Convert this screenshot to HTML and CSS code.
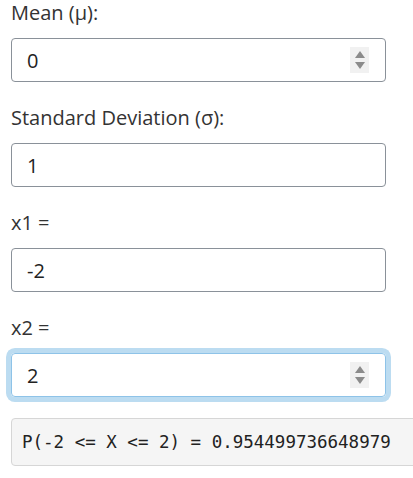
FILE: index.html
```html
<!DOCTYPE html>
<html>
<head>
<meta charset="utf-8">
<link rel="stylesheet" href="styles.css">
</head>
<body>
<div class="panel">
  <div class="form-group">
    <label class="lbl">Mean (μ):</label>
    <div class="field">
      <span class="val">0</span>
      <span class="spin"><span class="up"></span><span class="down"></span></span>
    </div>
  </div>
  <div class="form-group">
    <label class="lbl">Standard Deviation (σ):</label>
    <div class="field"><span class="val">1</span></div>
  </div>
  <div class="form-group">
    <label class="lbl">x1 =</label>
    <div class="field"><span class="val">-2</span></div>
  </div>
  <div class="form-group">
    <label class="lbl">x2 =</label>
    <div class="field focus">
      <span class="val">2</span>
      <span class="spin"><span class="up"></span><span class="down"></span></span>
    </div>
  </div>
  <pre class="result">P(-2 &lt;= X &lt;= 2) = 0.954499736648979</pre>
</div>
</body>
</html>
```
FILE: styles.css
```css
html, body {
  margin: 0;
  padding: 0;
  background: #fff;
  overflow: hidden;
}
body {
  font-family: "Open Sans", sans-serif;
  color: #333;
}
.panel {
  padding: 0 0 0 11px;
  width: 375px;
}
.form-group {
  margin-bottom: 23px;
}
.lbl {
  display: block;
  font-size: 20px;
  line-height: 25px;
  font-weight: 400;
  color: #333;
  margin-bottom: 13px;
}
.field {
  box-sizing: border-box;
  height: 44px;
  border: 1px solid #8a9199;
  border-radius: 4px;
  display: flex;
  align-items: center;
  padding: 0 16px 0 15px;
  font-size: 20px;
  color: #222;
}
.field.focus {
  border-color: #8ec3e8;
  box-shadow: 0 0 0 5px #bcdcf1;
}
.val {
  flex: 1;
}
.spin {
  width: 19px;
  height: 26px;
  background: #f1f1f1;
  display: flex;
  flex-direction: column;
  align-items: center;
  justify-content: center;
  gap: 4px;
}
.up {
  width: 0;
  height: 0;
  border-left: 5px solid transparent;
  border-right: 5px solid transparent;
  border-bottom: 7px solid #8b8b8b;
}
.down {
  width: 0;
  height: 0;
  border-left: 5px solid transparent;
  border-right: 5px solid transparent;
  border-top: 7px solid #8b8b8b;
}
.result {
  margin: -2px 0 0 0;
  width: 420px;
  box-sizing: border-box;
  background: #f5f5f5;
  border: 1px solid #d6d6d6;
  border-radius: 4px;
  padding: 11px 10px;
  font-family: "DejaVu Sans Mono", monospace;
  font-size: 17.5px;
  line-height: 24px;
  color: #222;
}
```
